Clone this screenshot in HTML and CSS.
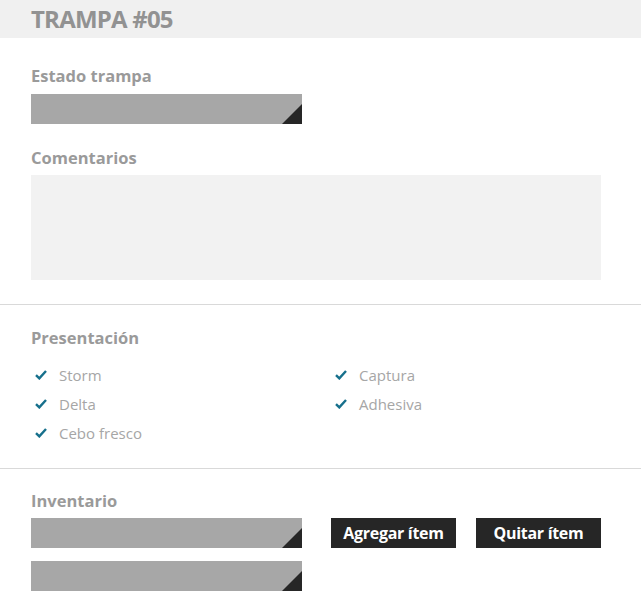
FILE: index.html
```html
<!DOCTYPE html>
<html lang="es">
<head>
<meta charset="utf-8">
<title>Trampa #05</title>
<link rel="stylesheet" href="styles.css">
</head>
<body>
<header class="header">
  <h1 class="title">TRAMPA #05</h1>
</header>

<section class="section section-first">
  <div class="label label-estado">Estado trampa</div>
  <div class="select"></div>
  <div class="label label-comentarios">Comentarios</div>
  <div class="textarea"></div>
</section>

<hr class="divider">

<section class="section section-pres">
  <div class="label">Presentación</div>
  <ul class="checks">
    <li class="check"><svg class="tick" viewBox="0 0 12 10" width="12" height="10"><path d="M1 5.2 L4.3 8.4 L11 1" fill="none" stroke="#17708c" stroke-width="2.4" stroke-linecap="butt" stroke-linejoin="miter"/></svg><span>Storm</span></li>
    <li class="check"><svg class="tick" viewBox="0 0 12 10" width="12" height="10"><path d="M1 5.2 L4.3 8.4 L11 1" fill="none" stroke="#17708c" stroke-width="2.4" stroke-linecap="butt" stroke-linejoin="miter"/></svg><span>Captura</span></li>
    <li class="check"><svg class="tick" viewBox="0 0 12 10" width="12" height="10"><path d="M1 5.2 L4.3 8.4 L11 1" fill="none" stroke="#17708c" stroke-width="2.4" stroke-linecap="butt" stroke-linejoin="miter"/></svg><span>Delta</span></li>
    <li class="check"><svg class="tick" viewBox="0 0 12 10" width="12" height="10"><path d="M1 5.2 L4.3 8.4 L11 1" fill="none" stroke="#17708c" stroke-width="2.4" stroke-linecap="butt" stroke-linejoin="miter"/></svg><span>Adhesiva</span></li>
    <li class="check"><svg class="tick" viewBox="0 0 12 10" width="12" height="10"><path d="M1 5.2 L4.3 8.4 L11 1" fill="none" stroke="#17708c" stroke-width="2.4" stroke-linecap="butt" stroke-linejoin="miter"/></svg><span>Cebo fresco</span></li>
  </ul>
</section>

<hr class="divider">

<section class="section section-inv">
  <div class="label">Inventario</div>
  <div class="inv-row">
    <div class="select"></div>
    <button class="btn">Agregar ítem</button>
    <button class="btn">Quitar ítem</button>
  </div>
  <div class="inv-row inv-row-2">
    <div class="select"></div>
  </div>
</section>
</body>
</html>
```

FILE: styles.css
```css
* { box-sizing: border-box; }

html, body {
  margin: 0;
  padding: 0;
  background: #ffffff;
  font-family: "Open Sans", "Liberation Sans", sans-serif;
}

.header {
  height: 38px;
  background: #f0f0f0;
  padding-left: 31px;
}

.title {
  margin: 0;
  font-size: 24px;
  line-height: 38px;
  font-weight: 700;
  color: #929292;
  letter-spacing: -0.8px;
}

.section {
  padding-left: 31px;
  padding-right: 40px;
}

.section-first {
  padding-top: 28px;
  padding-bottom: 24px;
}

.label {
  font-size: 16.5px;
  line-height: 20px;
  font-weight: 700;
  color: #9a9a9a;
}

.label-estado { margin-bottom: 8px; }
.label-comentarios { margin-top: 24px; margin-bottom: 7px; }

.select {
  position: relative;
  width: 271px;
  height: 30px;
  background: #a7a7a7;
  overflow: hidden;
}

.select::after {
  content: "";
  position: absolute;
  right: 0;
  bottom: 0;
  width: 0;
  height: 0;
  border-style: solid;
  border-width: 0 0 20px 20px;
  border-color: transparent transparent #262626 transparent;
}

.textarea {
  width: 570px;
  height: 105px;
  background: #f2f2f2;
}

.divider {
  margin: 0;
  border: 0;
  height: 1px;
  background: #d9d9d9;
}

.section-pres {
  padding-top: 23px;
  padding-bottom: 21px;
}

.checks {
  list-style: none;
  margin: 12px 0 0 0;
  padding: 0;
  display: grid;
  grid-template-columns: 300px 300px;
}

.check {
  display: flex;
  align-items: center;
  height: 29px;
  font-size: 15px;
  color: #a6a6a6;
}

.tick {
  margin-left: 4px;
  margin-right: 12px;
  flex: none;
}

.section-inv {
  padding-top: 22px;
}

.inv-row {
  display: flex;
  align-items: center;
  margin-top: 7px;
}

.inv-row-2 { margin-top: 13px; }

.btn {
  width: 125px;
  height: 30px;
  margin-left: 20px;
  border: 0;
  padding: 0;
  background: #262626;
  color: #ffffff;
  font-family: "Open Sans", "Liberation Sans", sans-serif;
  font-size: 16px;
  font-weight: 700;
  letter-spacing: -0.3px;
}

.inv-row .select + .btn { margin-left: 29px; }
```
